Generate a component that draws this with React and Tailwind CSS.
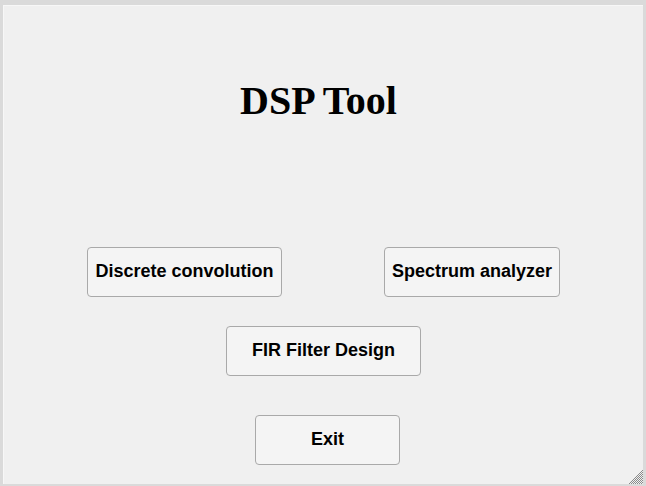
const Button = ({ label, width }) => (
  <button
    type="button"
    className={`h-[50px] ${width} rounded-[4px] border border-[#a9a9a9] bg-[#f4f4f4] text-[18px] font-bold text-black leading-none pb-[3px]`}
    style={{ fontFamily: '"Liberation Sans", Arial, sans-serif' }}
  >
    {label}
  </button>
);

const ResizeGrip = () => (
  <svg width="14" height="14" viewBox="0 0 14 14" className="absolute right-0 bottom-0">
    {Array.from({ length: 14 }).map((_, y) =>
      Array.from({ length: 14 }).map((_, x) =>
        x + y >= 13 && (x + y) % 2 === 1 ? (
          <rect key={`${x}-${y}`} x={x} y={y} width="1" height="1" fill="#8a8a8a" />
        ) : null
      )
    )}
  </svg>
);

const App = () => {
  return (
    <div className="w-[646px] h-[486px] bg-[#dadada] pt-[5px] px-[3px] pb-[2px] flex">
      <div className="relative flex-1 flex flex-col bg-[#f0f0f0] border-t border-l border-[#f7f7f7]">
        <h1
          className="mt-[72px] h-[46px] text-center text-[40px] font-bold leading-[46px] text-black pr-[10px]"
          style={{ fontFamily: '"Liberation Serif", "Times New Roman", serif' }}
        >
          DSP Tool
        </h1>

        <div className="mt-[123px] flex pl-[83px] gap-[102px]">
          <Button label="Discrete convolution" width="w-[195px]" />
          <Button label="Spectrum analyzer" width="w-[176px]" />
        </div>

        <div className="mt-[29px] flex pl-[222px]">
          <Button label="FIR Filter Design" width="w-[195px]" />
        </div>

        <div className="mt-[39px] flex pl-[251px]">
          <Button label="Exit" width="w-[145px]" />
        </div>

        <ResizeGrip />
      </div>
    </div>
  );
};

export default App;
